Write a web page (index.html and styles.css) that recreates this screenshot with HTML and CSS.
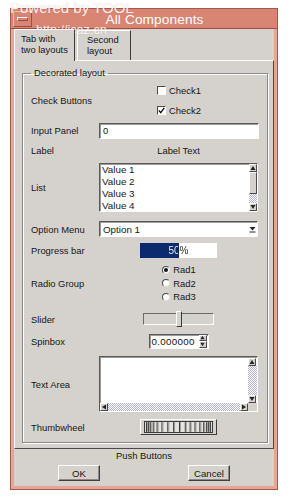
FILE: index.html
```html
<!DOCTYPE html>
<html lang="en">
<head>
  <meta charset="UTF-8">
  <meta name="viewport" content="width=device-width, initial-scale=1.0">
  <title>All Components</title>
  <link rel="stylesheet" href="styles.css">
</head>
<body>

  <div class="window">
    <div class="titlebar">
      <div class="menu-btn"><span></span></div>
      <div class="title">All Components</div>
    </div>

    <div class="client">
      <div class="tabs">
        <div class="tab active">Tab with<br>two layouts</div>
        <div class="tab">Second<br>layout</div>
      </div>

      <div class="panel">
        <fieldset class="group">
          <legend>Decorated layout</legend>
          <div class="form">

            <div class="lbl">Check Buttons</div>
            <div class="checks">
              <div class="check"><span class="box"></span>Check1</div>
              <div class="check">
                <span class="box">
                  <svg width="7" height="7" viewBox="0 0 7 7"><path d="M0.8 3.4 L2.7 5.6 L6.3 0.9" fill="none" stroke="#111" stroke-width="1.4"/></svg>
                </span>Check2
              </div>
            </div>

            <div class="lbl">Input Panel</div>
            <div class="entry">0</div>

            <div class="lbl">Label</div>
            <div class="label-text">Label Text</div>

            <div class="lbl">List</div>
            <div class="list">
              <div class="list-items">
                <div>Value 1</div>
                <div>Value 2</div>
                <div>Value 3</div>
                <div>Value 4</div>
              </div>
              <div class="vscroll">
                <div class="arrow"><svg width="6" height="6" viewBox="0 0 6 6"><path d="M3 1 L5.5 5 H0.5Z" fill="#222"/></svg></div>
                <div class="thumb"></div>
                <div class="trough"></div>
                <div class="arrow"><svg width="6" height="6" viewBox="0 0 6 6"><path d="M3 5 L5.5 1 H0.5Z" fill="#222"/></svg></div>
              </div>
            </div>

            <div class="lbl">Option Menu</div>
            <div class="option">
              <span class="option-text">Option 1</span>
              <span class="option-arrow"><svg width="7" height="7" viewBox="0 0 7 7"><path d="M0.5 1 H6.5 L3.5 4.5Z" fill="#222"/><path d="M0.5 6 H6.5" stroke="#222"/></svg></span>
            </div>

            <div class="lbl">Progress bar</div>
            <div class="progress" style="--value: 50%;">
              <span class="progress-text">50%</span>
            </div>

            <div class="lbl">Radio Group</div>
            <div class="radios">
              <div class="radio"><span class="dot on"></span>Rad1</div>
              <div class="radio"><span class="dot"></span>Rad2</div>
              <div class="radio"><span class="dot"></span>Rad3</div>
            </div>

            <div class="lbl">Slider</div>
            <div class="slider"><span class="slider-thumb"></span></div>

            <div class="lbl">Spinbox</div>
            <div class="spin">
              <span class="spin-text">0.000000</span>
              <span class="spin-btns">
                <span class="arrow"><svg width="5" height="5" viewBox="0 0 6 6"><path d="M3 1 L5.5 5 H0.5Z" fill="#222"/></svg></span>
                <span class="arrow"><svg width="5" height="5" viewBox="0 0 6 6"><path d="M3 5 L5.5 1 H0.5Z" fill="#222"/></svg></span>
              </span>
            </div>

            <div class="lbl">Text Area</div>
            <div class="textarea">
              <div class="text-body"></div>
              <div class="vscroll">
                <div class="arrow"><svg width="6" height="6" viewBox="0 0 6 6"><path d="M3 1 L5.5 5 H0.5Z" fill="#222"/></svg></div>
                <div class="trough"></div>
                <div class="arrow"><svg width="6" height="6" viewBox="0 0 6 6"><path d="M3 5 L5.5 1 H0.5Z" fill="#222"/></svg></div>
              </div>
              <div class="hscroll">
                <div class="arrow"><svg width="6" height="6" viewBox="0 0 6 6"><path d="M1 3 L5 0.5 V5.5Z" fill="#222"/></svg></div>
                <div class="trough"></div>
                <div class="arrow"><svg width="6" height="6" viewBox="0 0 6 6"><path d="M5 3 L1 0.5 V5.5Z" fill="#222"/></svg></div>
              </div>
              <div class="corner"></div>
            </div>

            <div class="lbl">Thumbwheel</div>
            <div class="wheel">
              <svg width="69" height="10" viewBox="0 0 69 10">
                <rect x="0" y="0" width="69" height="10" fill="#e6e4e0"/>
                <g stroke="#2a2a2a" stroke-width="1">
                  <path d="M1.5 0V10M3.5 0V10M5.5 0V10M8.5 0V10M12.5 0V10M17.5 0V10M23.5 0V10M29.5 0V10M35.5 0V10M41.5 0V10M46.5 0V10M51.5 0V10M56.5 0V10M60.5 0V10M63.5 0V10M65.5 0V10M67.5 0V10"/>
                </g>
                <g stroke="#9a9a9a" stroke-width="1">
                  <path d="M2.5 0V10M4.5 0V10M6.5 0V10M9.5 0V10M13.5 0V10M18.5 0V10M24.5 0V10M30.5 0V10M36.5 0V10M42.5 0V10M47.5 0V10M52.5 0V10M57.5 0V10M61.5 0V10M64.5 0V10M66.5 0V10"/>
                </g>
              </svg>
            </div>

          </div>
        </fieldset>
      </div>

      <div class="push-label">Push Buttons</div>
      <div class="buttons">
        <button class="btn">OK</button>
        <button class="btn">Cancel</button>
      </div>
    </div>
  </div>

  <div class="watermark">Powered by TOOL</div>
  <div class="watermark url">http://icaz.cn</div>

</body>
</html>
```

FILE: styles.css
```css
* {
  margin: 0;
  padding: 0;
  box-sizing: border-box;
}

body {
  font-family: "Liberation Sans", Arial, sans-serif;
  font-size: 9.4px;
  color: #151515;
  background: #fff;
  position: relative;
  width: 291px;
  height: 499px;
  overflow: hidden;
}

/* window frame */

.window {
  margin: 8px 0 0 10px;
  width: 268px;
  height: 482px;
  border: 1px solid #a5584c;
  background: #e7a596;
  padding: 0 3px 3px;
  display: flex;
  flex-direction: column;
}

.titlebar {
  margin: 0 -3px;
  height: 20px;
  background: #d98574;
  border-bottom: 1px solid #a04e42;
  display: flex;
  align-items: center;
  color: #fff;
}

.menu-btn {
  margin-left: 2px;
  width: 19px;
  height: 16px;
  border: 1px solid;
  border-color: #f0b8ac #9c4c40 #9c4c40 #f0b8ac;
  display: flex;
  align-items: center;
  justify-content: center;
}

.menu-btn span {
  width: 11px;
  height: 4px;
  border: 1px solid;
  border-color: #fff #9c4c40 #9c4c40 #fff;
}

.title {
  flex: 1;
  text-align: center;
  font-size: 13.7px;
  padding-top: 2px;
  letter-spacing: 0.1px;
}

.client {
  flex: 1;
  background: #d5d2cd;
  display: flex;
  flex-direction: column;
}

/* tabs */

.tabs {
  height: 31px;
  display: flex;
  align-items: flex-end;
  position: relative;
  z-index: 1;
}

.tab {
  height: 30px;
  padding: 3px 0 0 9px;
  line-height: 11px;
  border: 1px solid;
  border-bottom: none;
  border-color: #fff #3c3c3c #fff #fff;
  width: 54px;
  margin-left: 2px;
}

.tab.active {
  width: 61px;
  height: 32px;
  margin: 0 0 -1px 0;
  padding-left: 6px;
  background: #d5d2cd;
}

.panel {
  border: 1px solid;
  border-color: #fff #4a4a4a #4a4a4a #fff;
  padding: 6px 5px 5px 7px;
}

/* decorated group */

.group {
  border: 1px solid #8a8a8a;
  box-shadow: 1px 1px 0 #fff, inset 1px 1px 0 #fff;
  padding: 1px 9px 4px 8px;
}

.group legend {
  padding: 0 3px;
  line-height: 12px;
}

.form {
  display: grid;
  grid-template-columns: 68px 159px;
  grid-template-rows: 40px 21px 18px 57px 26px 16px 50px 22px 22px 64px 22px;
  align-items: center;
}

.entry, .list, .option, .spin, .textarea {
  background: #fff;
  border: 1px solid;
  border-color: #5a5a5a #fff #fff #5a5a5a;
  box-shadow: inset 1px 1px 0 #9a9a9a;
}

.arrow {
  width: 8px;
  height: 8px;
  background: #d5d2cd;
  border: 1px solid;
  border-color: #fff #4a4a4a #4a4a4a #fff;
  display: flex;
  align-items: center;
  justify-content: center;
}

.trough {
  flex: 1;
  background: repeating-conic-gradient(#fdfdff 0 25%, #b4b4d0 0 50%) 0 0 / 2px 2px;
}

/* check buttons */

.checks {
  justify-self: center;
  margin-left: 1px;
}

.check {
  height: 20px;
  display: flex;
  align-items: center;
}

.box {
  width: 9px;
  height: 9px;
  margin-right: 3px;
  background: #fff;
  border: 1px solid;
  border-color: #4a4a4a #fff #fff #4a4a4a;
  display: flex;
  align-items: center;
  justify-content: center;
}

.entry {
  height: 16px;
  width: 160px;
  line-height: 14px;
  padding-left: 3px;
}

.label-text {
  justify-self: center;
}

/* list */

.list {
  height: 49px;
  display: flex;
  overflow: hidden;
}

.list-items {
  flex: 1;
  padding-left: 2px;
  line-height: 12px;
  font-size: 9.8px;
}

.vscroll {
  width: 8px;
  display: flex;
  flex-direction: column;
}

.vscroll .thumb {
  height: 22px;
  background: #d5d2cd;
  border: 1px solid;
  border-color: #fff #4a4a4a #4a4a4a #fff;
}

/* option menu */

.option {
  height: 16px;
  display: flex;
  align-items: center;
  font-size: 9.8px;
}

.option-text {
  flex: 1;
  padding-left: 3px;
}

.option-arrow {
  width: 9px;
  display: flex;
  justify-content: center;
}

/* progress */

.progress {
  justify-self: center;
  width: 77px;
  height: 15px;
  background: linear-gradient(to right, #0c2a6e var(--value), #fff var(--value));
  display: flex;
}

.progress-text {
  flex: 1;
  line-height: 15px;
  text-align: center;
  font-size: 10px;
  color: transparent;
  background: linear-gradient(to right, #fff var(--value), #222 var(--value));
  -webkit-background-clip: text;
  background-clip: text;
}

/* radio group */

.radios {
  justify-self: center;
  margin-left: 1px;
}

.radio {
  height: 13.5px;
  display: flex;
  align-items: center;
}

.dot {
  width: 8px;
  height: 8px;
  border-radius: 50%;
  margin-right: 3px;
  background: #fff;
  border: 1px solid;
  border-color: #4a4a4a #ddd #ddd #4a4a4a;
  display: flex;
  align-items: center;
  justify-content: center;
}

.dot.on::after {
  content: "";
  width: 4px;
  height: 4px;
  border-radius: 50%;
  background: #111;
}

/* slider */

.slider {
  justify-self: center;
  width: 71px;
  height: 12px;
  border: 1px solid;
  border-color: #6a6a6a #fff #fff #6a6a6a;
  position: relative;
}

.slider-thumb {
  position: absolute;
  left: 32px;
  top: -3px;
  width: 6px;
  height: 16px;
  background: #d5d2cd;
  border: 1px solid;
  border-color: #fff #3c3c3c #3c3c3c #fff;
}

/* spinbox */

.spin {
  justify-self: center;
  width: 60px;
  height: 15px;
  display: flex;
  align-items: center;
}

.spin-text {
  flex: 1;
  padding-left: 2px;
  font-size: 9.8px;
  letter-spacing: 0.3px;
}

.spin-btns {
  display: flex;
  flex-direction: column;
  margin-right: 1px;
}

.spin-btns .arrow {
  width: 8px;
  height: 6.5px;
}

/* text area */

.textarea {
  height: 56px;
  display: grid;
  grid-template-columns: 1fr 9px;
  grid-template-rows: 1fr 8px;
}

.textarea .vscroll {
  width: 9px;
  padding-top: 1px;
}

.hscroll {
  display: flex;
}

.corner {
  background: #d5d2cd;
}

/* thumbwheel */

.wheel {
  justify-self: center;
  width: 77px;
  height: 16px;
  border: 1px solid;
  border-color: #fff #3c3c3c #3c3c3c #fff;
  background: #d5d2cd;
  padding: 2px 3px;
  display: flex;
}

.wheel svg {
  border: 1px solid #3c3c3c;
  width: 69px;
  height: 10px;
  box-sizing: content-box;
  margin-top: -1px;
}

/* push buttons */

.push-label {
  height: 13px;
  line-height: 13px;
  text-align: center;
}

.buttons {
  margin-top: 3px;
  display: flex;
  justify-content: space-around;
}

.btn {
  width: 42px;
  height: 16px;
  font-family: "Liberation Sans", Arial, sans-serif;
  font-size: 9.6px;
  color: #151515;
  background: #d5d2cd;
  border: 1px solid;
  border-color: #fff #404040 #404040 #fff;
  box-shadow: inset -1px -1px 0 #8a8a8a;
}

/* watermark */

.watermark {
  position: absolute;
  left: 10px;
  top: 0;
  font-size: 15px;
  line-height: 16px;
  color: rgba(255, 255, 255, 0.92);
  text-shadow: 0 0 1px rgba(160, 80, 70, 0.35);
}

.watermark.url {
  left: 36px;
  top: 23px;
  font-size: 12.6px;
  line-height: 14px;
}
```
